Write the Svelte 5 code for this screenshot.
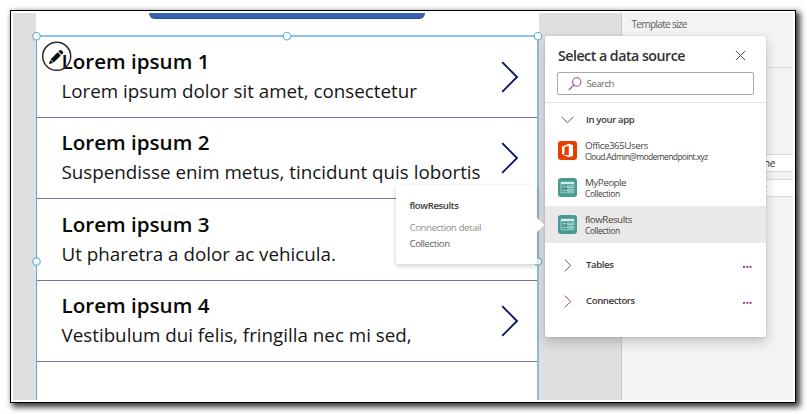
<script>
  const items = [
    { title: 'Lorem ipsum 1', body: 'Lorem ipsum dolor sit amet, consectetur' },
    { title: 'Lorem ipsum 2', body: 'Suspendisse enim metus, tincidunt quis lobortis' },
    { title: 'Lorem ipsum 3', body: 'Ut pharetra a dolor ac vehicula.' },
    { title: 'Lorem ipsum 4', body: 'Vestibulum dui felis, fringilla nec mi sed,' }
  ];
  const sources = [
    { name: 'Office365Users', detail: 'Cloud.Admin@modernendpoint.xyz', office: true },
    { name: 'MyPeople', detail: 'Collection' },
    { name: 'flowResults', detail: 'Collection', selected: true }
  ];
  const groups = ['Tables', 'Connectors'];
</script>

<div class="page">
  <div class="frame">
    <div class="studio">
      <div class="gutter"></div>
      <main class="screen">
        <div class="button"></div>
        <section class="gallery">
          {#each items as item}
            <article>
              <div class="copy">
                <h2>{item.title}</h2>
                <p>{item.body}</p>
              </div>
              <svg class="next" width="18" height="32" viewBox="0 0 18 32"><path d="M1.2 1.2 16 16 1.2 30.8" fill="none" stroke="#0b1168" stroke-width="1.9" /></svg>
            </article>
          {/each}
        </section>
      </main>
      <div class="gap"></div>
      <aside class="props">
        <div class="size">Template size</div>
        <div class="field first">ne</div>
        <div class="field">t</div>
      </aside>
    </div>
  </div>

  <svg class="handles" width="807" height="414" viewBox="0 0 807 414">
    <g fill="#fff" stroke="#63afe3" stroke-width="1.2">
      <circle cx="36.5" cy="36.2" r="3.7" />
      <circle cx="287" cy="36.2" r="3.7" />
      <circle cx="538" cy="36.2" r="3.7" />
      <circle cx="36.5" cy="261.5" r="3.7" />
      <circle cx="538" cy="261.5" r="3.7" />
    </g>
    <circle cx="56.7" cy="56.3" r="14" fill="none" stroke="#2b2929" stroke-width="1.5" />
    <g transform="translate(56.3 56.8) rotate(-45)" fill="#090909">
      <path d="M-5.8 -2.2H4.2V2.2H-5.8Z" />
      <path d="M-6.4 -1.9V1.9L-9.8 .5V-.5Z" />
      <path d="M5.2 -2.2H7.2Q8.2 -2.2 8.2 -1.2V1.2Q8.2 2.2 7.2 2.2H5.2Z" />
    </g>
  </svg>

  <div class="dialog">
    <header>
      <h1>Select a data source</h1>
      <svg width="11" height="11" viewBox="0 0 11 11"><path d="M.8 .8 10.2 10.2M10.2 .8 .8 10.2" stroke="#4c4a48" stroke-width="1" /></svg>
    </header>
    <div class="search">
      <svg width="14" height="14" viewBox="0 0 14 14" fill="none" stroke="#93578f" stroke-width="1.1"><circle cx="8.8" cy="5" r="4.2" /><path d="M5.8 8 .8 13" /></svg>
      <span>Search</span>
    </div>
    <div class="group open">
      <svg width="13" height="8" viewBox="0 0 13 8"><path d="M.6 .8 6.5 6.7 12.4 .8" fill="none" stroke="#84437f" /></svg>
      <b class="app">In your app</b>
    </div>
    {#each sources as s}
      <div class="source" class:selected={s.selected}>
        {#if s.office}
          <svg width="19" height="19" viewBox="0 0 19 19"><rect width="19" height="19" rx="3" fill="#eb3c00" /><path d="M4 5.6 11 2.8 15 4V15L11 16.2 4 13.6 10.8 14.3V4.9L6.5 6V12.5L4 13.6Z" fill="#fff" /></svg>
        {:else}
          <svg width="19" height="19" viewBox="0 0 19 19"><rect width="19" height="19" rx="3" fill="#459b94" /><path d="M3 4.2H16V14.8H3Z" fill="none" stroke="#a6d3cf" stroke-width=".9" /><path d="M3 4H16V6.2H3Z" fill="#d5ecea" /><path d="M4.5 8.7H8M4.5 12.6H8" stroke="#b5dcd8" stroke-width="1" /><path d="M9.5 8H14.5V9.6H9.5ZM9.5 11.7H14.5V13.2H9.5Z" fill="none" stroke="#c9e6e3" stroke-width=".9" /></svg>
        {/if}
        <div>
          <span class="name">{s.name}</span>
          <span class="detail" class:mail={s.office}>{s.detail}</span>
        </div>
      </div>
    {/each}
    <div class="rest">
      {#each groups as g}
        <div class="group">
          <svg width="8" height="13" viewBox="0 0 8 13"><path d="M.8 .6 6.7 6.5 .8 12.4" fill="none" stroke="#84437f" /></svg>
          <b class={g.toLowerCase()}>{g}</b>
          <svg class="more" width="9" height="2" viewBox="0 0 9 2" fill="#843e7e"><rect width="2" height="1.8" /><rect x="3.3" width="2" height="1.8" /><rect x="6.6" width="2" height="1.8" /></svg>
        </div>
      {/each}
    </div>
  </div>

  <div class="tip">
    <b>flowResults</b>
    <span class="label">Connection detail</span>
    <span class="value">Collection</span>
    <svg class="beak" width="9" height="18" viewBox="0 0 9 18"><path d="M0 1 8.5 9 0 17Z" fill="#fff" /></svg>
  </div>
</div>

<style>
  .page {
    position: relative;
    width: 807px;
    height: 414px;
    box-sizing: border-box;
    padding: 10px;
    overflow: hidden;
    background: #fff;
    font-family: 'Open Sans', 'Noto Sans', sans-serif;
    color: #323130;
  }
  .page :global(*) { box-sizing: border-box; }
  svg { display: block; flex: none; }
  h1, h2, p { margin: 0; white-space: nowrap; }
  span, b { white-space: nowrap; }
  .frame {
    width: 786px;
    height: 393px;
    border: 1px solid #000;
    padding: 2px;
    background: #fff;
    box-shadow: 3px 3px 6px 1px rgba(0, 0, 0, 0.8);
  }
  .studio { display: flex; width: 780px; height: 387px; overflow: hidden; }
  .gutter { width: 23px; background: #dfdfdf; }
  .screen { width: 503px; background: #fff; display: flex; flex-direction: column; }
  .button { width: 276px; height: 6px; margin-left: 113px; background: #3860b2; border-bottom: 1px solid #2a4fa0; border-radius: 0 0 7px 7px; }
  .gallery { flex: 1; margin-top: 16px; border: solid #5ea9dc; border-width: 2px 2px 0 1px; border-top-color: #8dc3ea; border-right-color: #86bde8; }
  article { height: 81.5px; display: flex; border-bottom: 1px solid #6e73b0; padding: 0 18px 0 24.5px; justify-content: space-between; }
  article:first-child { height: 80.5px; }
  article:first-child .copy { padding-top: 10px; }
  article:first-child .next { margin-top: 24px; }
  .copy { padding-top: 10.5px; }
  h2 { font-size: 20.6px; line-height: 28px; font-weight: 600; color: #080808; }
  p { font-size: 18.8px; line-height: 28px; margin-top: 2px; color: #151515; }
  .next { margin-top: 24.5px; }
  .gap { width: 82px; background: #dfdfdf; }
  .props { width: 172px; border-left: 1px solid #c8c8c8; background: #f3f3f3; font-size: 10px; letter-spacing: -0.68px; color: #605e5c; }
  .size { height: 55px; border-bottom: 1px solid #dedede; padding: 3px 0 0 9.5px; line-height: 16px; font-size: 10.2px; }
  .field { height: 18px; margin: 7px 0 0 60px; border: 1px solid #d8d8d8; border-right: 0; background: #fff; padding-left: 81px; line-height: 16px; color: #323130; }
  .field:last-child { padding-left: 80px; }
  .first { margin-top: 86px; letter-spacing: -0.3px; }
  .size { letter-spacing: -0.75px; letter-spacing: -0.76px; }
  .handles { position: absolute; left: 0; top: 0; }

  .dialog {
    position: absolute;
    left: 545px;
    top: 36px;
    width: 221px;
    height: 301px;
    background: #fff;
    border-radius: 2px;
    box-shadow: 0 5px 12px rgba(0, 0, 0, 0.2), 0 0 2px rgba(0, 0, 0, 0.18);
  }
  header { display: flex; justify-content: space-between; align-items: center; height: 36px; padding: 2px 20px 0 13px; }
  header h1 { margin-top: 1px; }
  h1 { font-size: 14.2px; line-height: 20px; font-weight: 600; letter-spacing: -0.5px; color: #323130; }
  .search { display: flex; align-items: center; gap: 4.5px; width: 197px; height: 23px; margin-left: 12px; padding-left: 10px; border: 1px solid #aaa8a6; border-radius: 2px; font-size: 9.6px; letter-spacing: -0.55px; color: #6b6967; }
  .search span { letter-spacing: -0.5px; }
  .open { margin-top: 7px; border-top: 1px solid #e2e2e2; height: 30px; padding: 5px 0 0 16px; }
  .group { display: flex; align-items: center; }
  b { font-size: 9.6px; line-height: 14px; font-weight: 600; letter-spacing: -0.4px; color: #3d3b39; }
  .open b { margin-left: 12px; }
  .source { height: 37px; display: flex; align-items: center; gap: 8px; padding-left: 13px; }
  .selected { background: #e9e9e9; }
  .source div { display: flex; flex-direction: column; }
  .name { font-size: 9.8px; line-height: 12px; letter-spacing: -0.48px; color: #484644; }
  .detail { font-size: 8.4px; line-height: 10px; letter-spacing: -0.38px; color: #3b3a39; }
  .mail { letter-spacing: -0.55px; }
  .rest { padding-top: 4px; }
  .rest .group { height: 36px; padding: 0 14px 0 19px; }
  .rest b { margin-left: 14px; }
  .more { margin: 3px 0 0 auto; }

  .tip {
    position: absolute;
    left: 396px;
    top: 185px;
    width: 141px;
    height: 79px;
    background: #fff;
    border-radius: 2px;
    padding: 14px 13.5px;
    display: flex;
    flex-direction: column;
    box-shadow: 0 2px 5px rgba(0, 0, 0, 0.2);
  }
  .tip span { font-size: 9.6px; line-height: 16px; letter-spacing: -0.4px; color: #5c5a58; }
  .tip .label { color: #918f8d; margin-top: 7px; }
  .beak { position: absolute; left: 140px; top: 31px; }
</style>
